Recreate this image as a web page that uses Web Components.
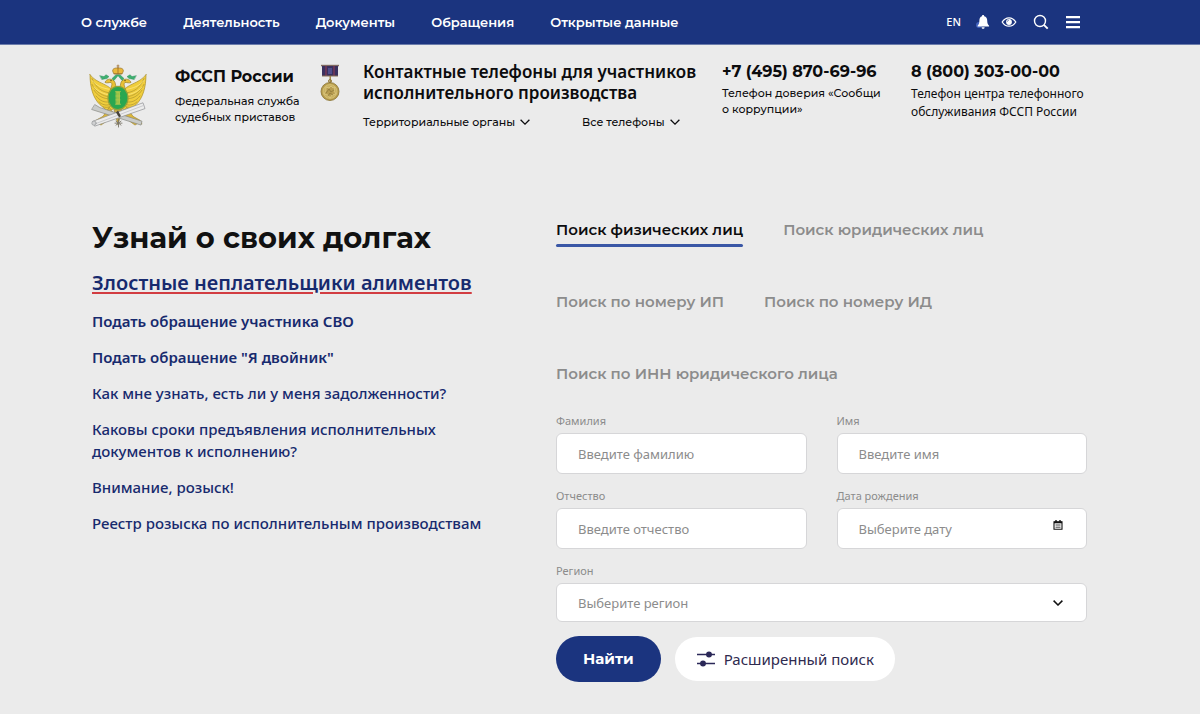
<!DOCTYPE html>
<html lang="ru">
<head>
<meta charset="utf-8">
<meta name="viewport" content="width=device-width, initial-scale=1">
<title>ФССП России</title>
<style>
    :root {
        --blue: #1b347f;
        --link: #172a6e;
        --ink: #0c0c0e;
        --muted: #8c8c8c;
        --line: #d6d6d8;
        --display: Montserrat, Inter, sans-serif;
        --text: "Noto Sans", "Open Sans", sans-serif;
    }

    body {
        margin: 0;
        background: #ebebeb;
        color: var(--ink);
        font-family: var(--text);
    }
</style>
</head>
<body>
<fssp-topbar></fssp-topbar>
<fssp-header></fssp-header>
<fssp-main>
    <fssp-links slot="aside"></fssp-links>
    <fssp-search></fssp-search>
</fssp-main>

<script>
class FsspTopbar extends HTMLElement {
    constructor() {
        super();
        this.attachShadow({ mode: 'open' });
    }

    connectedCallback() {
        const items = ['О службе', 'Деятельность', 'Документы', 'Обращения', 'Открытые данные'];
        this.shadowRoot.innerHTML = `
            <style>
                :host {
                    display: flex;
                    justify-content: space-between;
                    align-items: center;
                    min-height: 44px;
                    padding: 0 119px 0 81px;
                    border-bottom: 1px solid #6b7cab;
                    background: var(--blue);
                    color: #fff;
                }
                nav {
                    display: flex;
                    gap: 36px;
                }
                a {
                    color: inherit;
                    text-decoration: none;
                    font: 600 13px/20px var(--display);
                }
                .tools {
                    display: flex;
                    align-items: center;
                }
                .tools a {
                    font: 500 11px/20px var(--text);
                    margin-right: 14px;
                }
                button {
                    display: flex;
                    padding: 0;
                    border: 0;
                    background: none;
                    color: inherit;
                    cursor: pointer;
                }
                .bell { margin-right: 10px; }
                .eye, .search { margin-right: 16px; }
            </style>
            <nav>${items.map(item => `<a href="#">${item}</a>`).join('')}</nav>
            <div class="tools">
                <a href="#">EN</a>
                <button class="bell" aria-label="Уведомления">
                    <svg width="16" height="16" viewBox="0 0 16 16" fill="#fff">
                        <circle cx="4" cy="11" r="3" fill="#4262bd"/>
                        <path d="M8 1.100c.8 0 1.200.5 1.200 1.200 2 .6 3 2.100 3 4.300 0 2.800.7 4 1.900 5.200v.8H2.600v-.8c1.200-1.200 1.800-2.400 1.800-5.200 0-2.200.8-3.700 2.600-4.300 0-.7.3-1.200 1-1.200zM6.600 13.200h3c0 1-.6 1.600-1.500 1.600s-1.500-.6-1.500-1.600z"/>
                    </svg>
                </button>
                <button class="eye" aria-label="Версия для слабовидящих">
                    <svg width="16" height="16" viewBox="0 0 16 16" fill="none" stroke="#fff" stroke-width="1.300">
                        <path d="M1.200 8C3 5.100 5.400 3.800 8 3.800S13 5.100 14.800 8C13 10.900 10.600 12.200 8 12.200S3 10.900 1.200 8z"/>
                        <circle cx="8" cy="8" r="2.900" fill="#fff" stroke="none"/>
                        <path d="M6.500 7.500a1.500 1.500 0 0 1 1.200-1.300" stroke="#1b347f" stroke-width=".7"/>
                    </svg>
                </button>
                <button class="search" aria-label="Поиск по сайту">
                    <svg width="16" height="16" viewBox="0 0 16 16" fill="none" stroke="#fff" stroke-width="1.400">
                        <circle cx="7" cy="7" r="5.500"/>
                        <path d="M10.900 10.900l3.800 3.800" stroke-width="1.900"/>
                    </svg>
                </button>
                <button aria-label="Меню">
                    <svg width="16" height="16" viewBox="0 0 16 16" fill="#fff">
                        <path d="M1 2h14v2.300H1zM1 7h14v2.300H1zM1 12h14v2.300H1z"/>
                    </svg>
                </button>
            </div>
        `;
    }
}

customElements.define('fssp-topbar', FsspTopbar);

class FsspEmblem extends HTMLElement {
    constructor() {
        super();
        this.attachShadow({ mode: 'open' });
    }

    connectedCallback() {
        const wing = `
            <path d="M2 11c0 13 3 24 10 31l8 7 6-3V30C22 20 9 21 2 11z" fill="#f0cd3c" stroke="#a98d27" stroke-width=".7"/>
            <path d="M4 15c4 10 10 14 19 15M4 21c4 8 10 12 18 13M6 27c4 6 9 9 16 9M8 33c4 5 8 7 14 6M11 39c3 3 7 4 10 3M15 44c2 1 4 1 7 0" fill="none" stroke="#b59a30" stroke-width=".8"/>
            <path d="M4 17c5 6 11 8 17 9M6 24c5 5 10 7 16 8" fill="none" stroke="#fff09a" stroke-width=".6"/>`;
        this.shadowRoot.innerHTML = `
            <style>
                :host { display: block; }
                svg { display: block; }
            </style>
            <svg width="60" height="64" viewBox="0 0 60 66" preserveAspectRatio="none" role="img" aria-label="Герб ФССП России" stroke-linejoin="round" stroke-linecap="round">
                <!-- wings -->
                <g>${wing}</g>
                <g transform="translate(60 0) scale(-1 1)">${wing}</g>
                <!-- legs and tail -->
                <path d="M21 45l-6 9-7 4-2 4 4-1 3 2 4-3 9-8zM39 45l6 9 7 4 2 4-4-1-3 2-4-3-9-8z" fill="#dcb73a" stroke="#9c8228" stroke-width=".6"/>
                <path d="M26 47l4 16 4-16z" fill="#c8aa42" stroke="#8e7a36" stroke-width=".6"/>
                <!-- necks and heads -->
                <path d="M24 31c-4-6 2-9-1-12-2 0-4 1-6 0 1-4 8-5 10 0 1 4 1 6 3 7 2-1 2-3 3-7 2-5 9-4 10 0-2 1-4 0-6 0-3 3 3 6-1 12z" fill="#e9c137" stroke="#9c8228" stroke-width=".7"/>
                <circle cx="23" cy="17" r=".7" fill="#59491c"/>
                <circle cx="37" cy="17" r=".7" fill="#59491c"/>
                <!-- ribbons -->
                <path d="M12 12l4 1 2-2 3 2-2 2-5 1zM48 12l-4 1-2-2-3 2 2 2 5 1zM28 11l-4 4 2 2 4-5 4 5 2-2-4-4z" fill="#3daf70" stroke="#278653" stroke-width=".4"/>
                <!-- crown -->
                <path d="M26 10c-3-4-1-6 4-6s7 2 4 6z" fill="#ebb83b" stroke="#98742a" stroke-width=".7"/>
                <path d="M30 4v6M26 10h8M30 1v3M29 2h2" fill="none" stroke="#9d6d29" stroke-width=".8"/>
                <!-- axe and scroll -->
                <path d="M7 42l5 3 42 14-1 4-43-14-6-2z" fill="#c9cbc9" stroke="#868782" stroke-width=".7"/>
                <path d="M5 59l50-19 2 6L7 64z" fill="#ececec" stroke="#8c8e91" stroke-width=".7"/>
                <path d="M9 61l46-18" stroke="#bfc1c5" stroke-width=".8"/>
                <circle cx="6" cy="61" r="2.200" fill="#d0d1d3" stroke="#8c8e91" stroke-width=".6"/>
                <path d="M28 50l2-2 3 6-2 1z" fill="#46413a"/>
                <path d="M28 59l5 4M33 59l-5 4M30.500 57v8M27 61h7" stroke="#7a7568" stroke-width=".9"/>
                <!-- shield -->
                <ellipse cx="30" cy="35" rx="10" ry="12" fill="#29a750" stroke="#91a23b" stroke-width="1.200"/>
                <path d="M28.500 29h3v12h-3zM27.500 28.500h5M27.500 41.500h5M28 33h4M28 37h4" fill="#9ac247" stroke="#b9c94c" stroke-width=".8"/>
            </svg>
        `;
    }
}

customElements.define('fssp-emblem', FsspEmblem);

class FsspMedal extends HTMLElement {
    constructor() {
        super();
        this.attachShadow({ mode: 'open' });
    }

    connectedCallback() {
        this.shadowRoot.innerHTML = `
            <style>
                :host { display: block; }
                svg { display: block; }
            </style>
            <svg width="20" height="38" viewBox="0 0 20 38" role="img" aria-label="Медаль">
                <path d="M1 .8h18v1.500H1z" fill="#816a61"/>
                <path d="M2 2h16v10H2z" fill="#3a315f"/>
                <path d="M5 2h2v10H5zM13 2h2v10h-2z" fill="#683557"/>
                <path d="M8 4h4v6H8z" fill="#504e8c"/>
                <path d="M2 11.500h16v1H2z" fill="#897056"/>
                <path d="M9.500 12h1.500v6H9.500z" fill="#a28a49"/>
                <circle cx="10" cy="17" r="1.500" fill="none" stroke="#937a39"/>
                <circle cx="10" cy="27.500" r="9" fill="#b89d4c" stroke="#86702f" stroke-width=".8"/>
                <circle cx="10" cy="27.500" r="7" fill="#c9b162" stroke="#dcc981" stroke-width=".6"/>
                <path d="M6 23l3 1 2-2 2 2 2-1-1 4 2 3-4 1-2 3-2-3-4-1 2-3z" fill="#b89d50" stroke="#e5d38d" stroke-width=".6"/>
                <path d="M6 29l3-4 2 3 3-2M8 32l2-3 3 2" fill="none" stroke="#8d783a" stroke-width=".8"/>
            </svg>
        `;
    }
}

customElements.define('fssp-medal', FsspMedal);

class FsspHeader extends HTMLElement {
    constructor() {
        super();
        this.attachShadow({ mode: 'open' });
    }

    connectedCallback() {
        const chevron = `
            <svg width="10" height="6" viewBox="0 0 10 6" fill="none" stroke="currentColor" stroke-width="1.300">
                <path d="M.6.700L5 5.100 9.400.700"/>
            </svg>`;
        this.shadowRoot.innerHTML = `
            <style>
                :host {
                    display: grid;
                    grid-template-columns: 87px 145px 43px minmax(0, 359fr) minmax(0, 189fr) minmax(0, 177fr);
                    align-items: start;
                    padding: 16px 112px 0 88px;
                }
                h2, p { margin: 0; }
                h2 { font: 600 17px/21px var(--text); }
                .brand h2 { font: 700 16px/20px var(--display); }
                .brand { padding-top: 6px; }
                p {
                    font: 500 11px/16px var(--display);
                    padding-top: 6px;
                }
                .phone { padding-top: 1px; }
                .phone p { padding-top: 3px; }
                .center p { font: 400 12px/18px var(--text); }
                .phone a {
                    display: block;
                    color: inherit;
                    text-decoration: none;
                    font: 700 16px/20px var(--display);
                    white-space: nowrap;
                }
                fssp-emblem, fssp-medal { padding-top: 3px; }
                .menus {
                    display: flex;
                    gap: 52px;
                    padding: 10px 0 1px;
                }
                button {
                    display: flex;
                    align-items: center;
                    gap: 5px;
                    padding: 0;
                    border: 0;
                    background: none;
                    color: inherit;
                    font: 500 11px/18px var(--display);
                    cursor: pointer;
                }
            </style>
            <fssp-emblem></fssp-emblem>
            <div class="brand">
                <h2>ФССП России</h2>
                <p>Федеральная служба<br>судебных приставов</p>
            </div>
            <fssp-medal></fssp-medal>
            <div>
                <h2>Контактные телефоны для участников<br>исполнительного производства</h2>
                <div class="menus">
                    <button>Территориальные органы ${chevron}</button>
                    <button>Все телефоны ${chevron}</button>
                </div>
            </div>
            <div class="phone">
                <a href="tel:+74958706996">+7 (495) 870-69-96</a>
                <p>Телефон доверия «Сообщи<br>о коррупции»</p>
            </div>
            <div class="phone center">
                <a href="tel:88003030000">8 (800) 303-00-00</a>
                <p>Телефон центра телефонного<br>обслуживания ФССП России</p>
            </div>
        `;
    }
}

customElements.define('fssp-header', FsspHeader);

class FsspMain extends HTMLElement {
    constructor() {
        super();
        this.attachShadow({ mode: 'open' });
    }

    connectedCallback() {
        this.shadowRoot.innerHTML = `
            <style>
                :host {
                    display: grid;
                    grid-template-columns: minmax(0, 434fr) minmax(0, 531fr);
                    gap: 30px;
                    align-items: start;
                    padding: 88px 113px 32px 92px;
                }
            </style>
            <slot name="aside"></slot>
            <slot></slot>
        `;
    }
}

customElements.define('fssp-main', FsspMain);

class FsspLinks extends HTMLElement {
    constructor() {
        super();
        this.attachShadow({ mode: 'open' });
    }

    connectedCallback() {
        this.shadowRoot.innerHTML = `
            <style>
                :host {
                    display: block;
                    color: var(--link);
                }
                h1 {
                    margin: 0;
                    color: #111;
                    font: 700 29px/36px var(--display);
                }
                ul {
                    display: grid;
                    gap: 14px;
                    margin: 14px 0 0;
                    padding: 0;
                    list-style: none;
                    font: 500 15px/22px var(--text);
                }
                a {
                    color: inherit;
                    text-decoration: none;
                }
                .bold { font-weight: 600; }
                .lead {
                    font: 600 20px/26px var(--text);
                    text-decoration: underline 2px #d23c41;
                    text-underline-offset: 2px;
                }
            </style>
            <h1>Узнай о своих долгах</h1>
            <ul>
                <li><a class="lead" href="#">Злостные неплательщики алиментов</a></li>
                <li><a class="bold" href="#">Подать обращение участника СВО</a></li>
                <li><a class="bold" href="#">Подать обращение "Я двойник"</a></li>
                <li><a href="#">Как мне узнать, есть ли у меня задолженности?</a></li>
                <li><a href="#">Каковы сроки предъявления исполнительных<br>документов к исполнению?</a></li>
                <li><a href="#">Внимание, розыск!</a></li>
                <li><a href="#">Реестр розыска по исполнительным производствам</a></li>
            </ul>
        `;
    }
}

customElements.define('fssp-links', FsspLinks);

class FsspField extends HTMLElement {
    constructor() {
        super();
        this.attachShadow({ mode: 'open' });
    }

    connectedCallback() {
        const label = this.getAttribute('label');
        const hint = this.getAttribute('hint');
        const type = this.getAttribute('type');
        const control = type === 'select'
            ? `<select id="control"><option>${hint}</option></select>
               <svg class="icon" width="10" height="6" viewBox="0 0 10 6" fill="none" stroke="#111" stroke-width="1.500"><path d="M.6.600L5 5 9.400.600"/></svg>`
            : `<input id="control" type="text" placeholder="${hint}">`;
        const calendar = `
            <button class="icon" type="button" aria-label="Открыть календарь">
                <svg width="10" height="10" viewBox="0 0 10 10" fill="none" stroke="#111">
                    <path d="M1 1.700h8v7.500H1z" stroke-width="1.100"/>
                    <path d="M1 2.500h8" stroke-width="1.600"/>
                    <path d="M3 0v2M7 0v2" stroke-width="1.400"/>
                    <path d="M2.500 5h5M2.500 7.200h5" stroke-width=".8"/>
                </svg>
            </button>`;
        this.shadowRoot.innerHTML = `
            <style>
                :host {
                    display: block;
                    color: var(--muted);
                }
                label {
                    display: block;
                    padding-bottom: 4px;
                    font: 400 11px/16px var(--text);
                }
                .box { position: relative; }
                input, select {
                    display: block;
                    box-sizing: border-box;
                    width: 100%;
                    height: 41px;
                    padding: 0 21px;
                    border: 1px solid var(--line);
                    border-radius: 6px;
                    background: #fff;
                    color: inherit;
                    font: 400 13px/20px var(--text);
                    appearance: none;
                }
                select { height: 39px; }
                input::placeholder { color: inherit; }
                .icon {
                    position: absolute;
                    top: 17px;
                    right: 24px;
                    pointer-events: none;
                }
                button.icon {
                    display: flex;
                    top: 12px;
                    padding: 0;
                    border: 0;
                    background: none;
                    pointer-events: auto;
                }
            </style>
            <label for="control">${label}</label>
            <div class="box">${control}${type === 'date' ? calendar : ''}</div>
        `;
    }
}

customElements.define('fssp-field', FsspField);

class FsspSearch extends HTMLElement {
    constructor() {
        super();
        this.attachShadow({ mode: 'open' });
    }

    connectedCallback() {
        const tabs = [
            'Поиск физических лиц',
            'Поиск юридических лиц',
            'Поиск по номеру ИП',
            'Поиск по номеру ИД',
            'Поиск по ИНН юридического лица'
        ];
        this.shadowRoot.innerHTML = `
            <style>
                :host { display: block; }
                .tabs {
                    display: flex;
                    flex-wrap: wrap;
                    gap: 45px 40px;
                }
                button {
                    border: 0;
                    cursor: pointer;
                }
                .tabs button {
                    position: relative;
                    padding: 0 0 7px;
                    background: none;
                    color: var(--muted);
                    font: 600 15px/20px var(--display);
                }
                .tabs button[aria-selected="true"] { color: var(--ink); }
                .tabs button[aria-selected="true"]::after {
                    content: '';
                    position: absolute;
                    inset: auto 0 0;
                    height: 3px;
                    border-radius: 2px;
                    background: #3a57a6;
                }
                form {
                    display: grid;
                    grid-template-columns: 1fr 1fr;
                    gap: 14px 30px;
                    padding-top: 22px;
                }
                .wide { grid-column: 1 / -1; }
                .actions {
                    display: flex;
                    align-items: center;
                    gap: 14px;
                }
                .find {
                    height: 46px;
                    padding: 0 27px;
                    border-radius: 23px;
                    background: var(--blue);
                    color: #fff;
                    font: 700 15px/20px var(--display);
                }
                .more {
                    display: flex;
                    align-items: center;
                    gap: 8px;
                    height: 44px;
                    padding: 0 21px;
                    border-radius: 22px;
                    background: #fff;
                    color: #2f2b4f;
                    font: 400 15px/20px var(--text);
                }
            </style>
            <div class="tabs" role="tablist">
                ${tabs.map((tab, index) => `<button role="tab" aria-selected="${index === 0}">${tab}</button>`).join('')}
            </div>
            <form>
                <fssp-field label="Фамилия" hint="Введите фамилию"></fssp-field>
                <fssp-field label="Имя" hint="Введите имя"></fssp-field>
                <fssp-field label="Отчество" hint="Введите отчество"></fssp-field>
                <fssp-field label="Дата рождения" hint="Выберите дату" type="date"></fssp-field>
                <fssp-field class="wide" label="Регион" hint="Выберите регион" type="select"></fssp-field>
                <div class="actions wide">
                    <button class="find" type="button">Найти</button>
                    <button class="more" type="button">
                        <svg width="20" height="16" viewBox="0 0 20 16" fill="#2b2858" stroke="#2b2858" stroke-width="1.500">
                            <path d="M1 3.500h18M1 12.500h18"/>
                            <circle cx="13" cy="3.500" r="2.200"/>
                            <circle cx="7" cy="12.500" r="2.200"/>
                        </svg>
                        Расширенный поиск
                    </button>
                </div>
            </form>
        `;
    }
}

customElements.define('fssp-search', FsspSearch);
</script>
</body>
</html>
